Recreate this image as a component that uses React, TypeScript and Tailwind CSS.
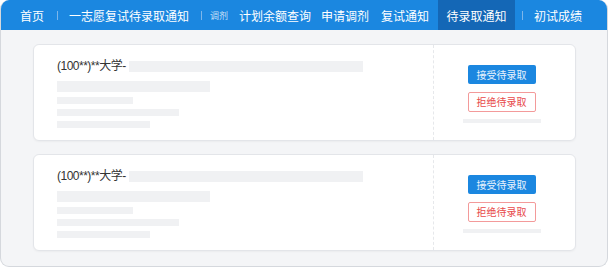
import React from "react";

const Sep = ({ ml }: { ml: string }) => (
  <span className={`h-[9px] w-px bg-[#7db6ea] ${ml}`} />
);

function Card() {
  return (
    <div className="flex h-[97px] rounded-[6px] border border-[#e3e5e9] bg-white shadow-[0_1px_2px_rgba(0,0,0,0.04)]">
      <div className="flex-1 pl-[23px] pt-[15px]">
        <div className="flex items-center h-[12px]">
          <span
            className="text-[12px] leading-[12px] text-[#333] tracking-[-0.5px]"
            style={{ fontFamily: '"Liberation Sans", "Noto Sans CJK SC", sans-serif' }}
          >
            (100**)**大学-
          </span>
          <span className="ml-[3px] h-[11px] w-[234px] bg-[#f0f1f3]" />
        </div>
        <div className="mt-[9px] h-[11px] w-[153px] bg-[#f0f1f3]" />
        <div className="mt-[5px] h-[7px] w-[76px] bg-[#f0f1f3]" />
        <div className="mt-[5px] h-[7px] w-[122px] bg-[#f0f1f3]" />
        <div className="mt-[5px] h-[7px] w-[93px] bg-[#f0f1f3]" />
      </div>
      <div className="w-[142px] border-l border-dashed border-[#e6e8eb] flex flex-col items-center pt-[20px] pr-[6px]">
        <button className="h-[19px] w-[68px] rounded-[2px] bg-[#1b87e0] text-[10px] leading-[19px] text-white/90">
          接受待录取
        </button>
        <button className="mt-[8px] h-[20px] w-[68px] rounded-[2px] border border-[#f39a9a] bg-white text-[10px] leading-[18px] text-[#e84a4a]">
          拒绝待录取
        </button>
        <div className="mt-[7px] h-[4px] w-[78px] bg-[#f0f1f3]" />
      </div>
    </div>
  );
}

export default function App() {
  return (
    <div
      className="w-[608px] h-[267px] bg-white"
      style={{ fontFamily: '"Noto Sans CJK SC", "Noto Sans", sans-serif' }}
    >
      <div className="h-[267px] w-[608px] overflow-hidden rounded-[9px] border border-[#d5d8dd] border-t-0 bg-[#f4f5f7] flex flex-col">
        <div className="h-[30px] bg-[#1b87e0] flex items-center text-white text-[12px] leading-[12px] shrink-0">
          <span className="ml-[19px] pt-[2px]">首页</span>
          <Sep ml="ml-[13px]" />
          <span className="ml-[11px] pt-[2px]">一志愿复试待录取通知</span>
          <Sep ml="ml-[12px]" />
          <span className="ml-[8px] text-[9px] text-white/75 pt-[2px]">调剂</span>
          <span className="ml-[11px] pt-[2px]">计划余额查询</span>
          <span className="ml-[10px] pt-[2px]">申请调剂</span>
          <span className="ml-[12px] pt-[2px]">复试通知</span>
          <span className="ml-[9px] h-[30px] w-[77px] bg-[#1467b6] flex items-center justify-center pt-[2px]">待录取通知</span>
          <Sep ml="ml-[7px]" />
          <span className="ml-[11px] pt-[2px]">初试成绩</span>
        </div>
        <div className="flex flex-col gap-[13px] pl-[32px] pr-[31px] pt-[14px]">
          <Card />
          <Card />
        </div>
      </div>
    </div>
  );
}
